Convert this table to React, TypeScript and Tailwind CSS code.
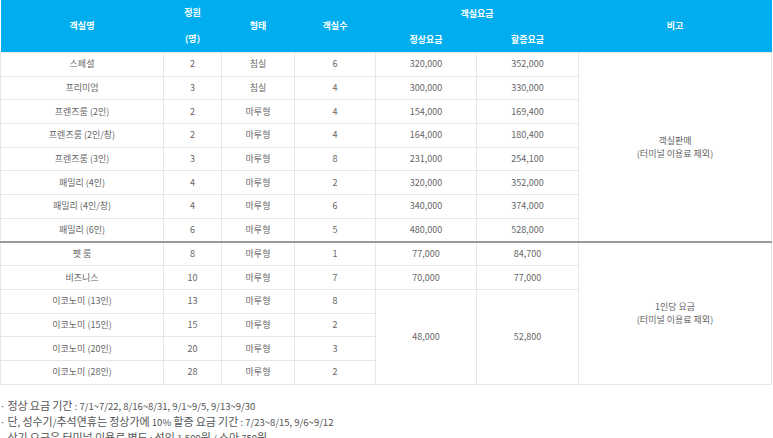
import React from "react";

const rows1 = [
  ["스페셜", "2", "침실", "6", "320,000", "352,000"],
  ["프리미엄", "3", "침실", "4", "300,000", "330,000"],
  ["프렌즈룸 (2인)", "2", "마루형", "4", "154,000", "169,400"],
  ["프렌즈룸 (2인/창)", "2", "마루형", "4", "164,000", "180,400"],
  ["프렌즈룸 (3인)", "3", "마루형", "8", "231,000", "254,100"],
  ["패밀리 (4인)", "4", "마루형", "2", "320,000", "352,000"],
  ["패밀리 (4인/창)", "4", "마루형", "6", "340,000", "374,000"],
  ["패밀리 (6인)", "6", "마루형", "5", "480,000", "528,000"],
];

const economy = [
  ["이코노미 (13인)", "13", "마루형", "8"],
  ["이코노미 (15인)", "15", "마루형", "2"],
  ["이코노미 (20인)", "20", "마루형", "3"],
  ["이코노미 (28인)", "28", "마루형", "2"],
];

const notes = [
  "· 정상 요금 기간 : 7/1~7/22, 8/16~8/31, 9/1~9/5, 9/13~9/30",
  "· 단, 성수기/추석연휴는 정상가에 10% 할증 요금 기간 : 7/23~8/15, 9/6~9/12",
  "· 상기 요금은 터미널 이용료 별도 : 성인 1,500원 / 소아 750원",
];

const td = "border border-[#e6e6e6] text-center align-middle h-[23.7px] leading-[12px] p-0";
const th = "text-center align-middle font-bold text-white p-0";

// hangul runs a bit bigger than the latin/digit runs, like the original font
function Note({ text }: { text: string }) {
  const parts = text.split(/([가-힣]+)/);
  return (
    <li>
      {parts.map((p, i) =>
        /[가-힣]/.test(p) ? (
          <span key={i} className="text-[11px]">{p}</span>
        ) : (
          <span key={i} className="text-[9.5px]">{p}</span>
        )
      )}
    </li>
  );
}

export default function App() {
  return (
    <div
      className="w-[773px] bg-white text-[9px] text-[#666]"
      style={{ fontFamily: '"Noto Sans CJK KR", "Noto Sans", sans-serif' }}
    >
      <table className="w-[771px] border-collapse table-fixed">
        <colgroup>
          <col className="w-[163px]" />
          <col className="w-[58px]" />
          <col className="w-[73px]" />
          <col className="w-[81px]" />
          <col className="w-[101px]" />
          <col className="w-[102px]" />
          <col className="w-[193px]" />
        </colgroup>
        <thead className="bg-[#00aeef]">
          <tr className="h-[25px]">
            <th rowSpan={2} className={th}>객실명</th>
            <th rowSpan={2} className={`${th} leading-[26px]`}>
              정원
              <br />
              (명)
            </th>
            <th rowSpan={2} className={th}>형태</th>
            <th rowSpan={2} className={th}>객실수</th>
            <th colSpan={2} className={th}>객실요금</th>
            <th rowSpan={2} className={th}>비고</th>
          </tr>
          <tr className="h-[24px]">
            <th className={th}>정상요금</th>
            <th className={th}>할증요금</th>
          </tr>
        </thead>
        <tbody>
          {rows1.map((r, i) => (
            <tr key={r[0]}>
              {r.map((c, j) => (
                <td key={j} className={td}>{c}</td>
              ))}
              {i === 0 && (
                <td rowSpan={8} className={`${td} leading-[13px]`}>
                  객실판매
                  <br />
                  (터미널 이용료 제외)
                </td>
              )}
            </tr>
          ))}
          <tr className="border-t-2 border-t-[#999]">
            <td className={td}>펫 룸</td>
            <td className={td}>8</td>
            <td className={td}>마루형</td>
            <td className={td}>1</td>
            <td className={td}>77,000</td>
            <td className={td}>84,700</td>
            <td rowSpan={6} className={`${td} leading-[13px]`}>
              1인당 요금
              <br />
              (터미널 이용료 제외)
            </td>
          </tr>
          <tr>
            <td className={td}>비즈니스</td>
            <td className={td}>10</td>
            <td className={td}>마루형</td>
            <td className={td}>7</td>
            <td className={td}>70,000</td>
            <td className={td}>77,000</td>
          </tr>
          {economy.map((r, i) => (
            <tr key={r[0]}>
              {r.map((c, j) => (
                <td key={j} className={td}>{c}</td>
              ))}
              {i === 0 && (
                <>
                  <td rowSpan={4} className={td}>48,000</td>
                  <td rowSpan={4} className={td}>52,800</td>
                </>
              )}
            </tr>
          ))}
        </tbody>
      </table>
      <ul className="mt-[13px] leading-[15px] text-[#555]">
        {notes.map((n) => (
          <Note key={n} text={n} />
        ))}
      </ul>
    </div>
  );
}
